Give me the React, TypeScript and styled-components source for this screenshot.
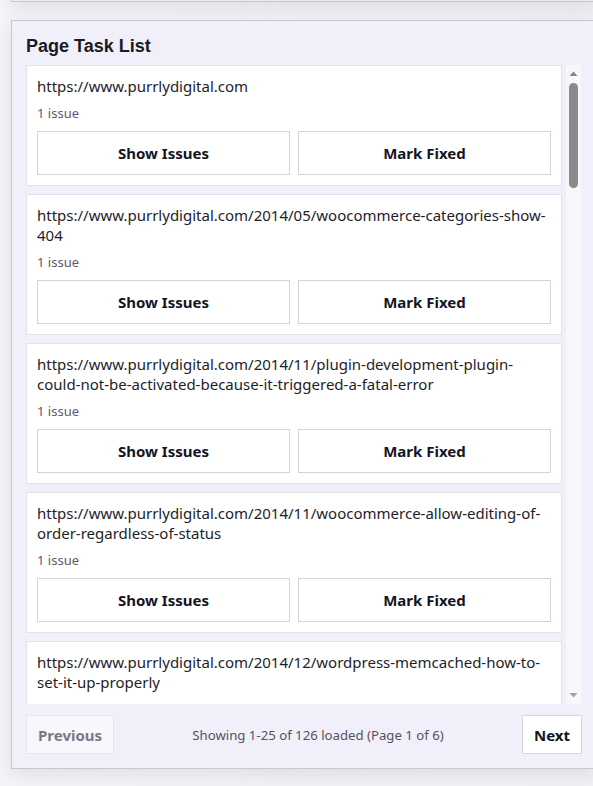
import React from "react";
import styled, { createGlobalStyle } from "styled-components";

const GlobalStyle = createGlobalStyle`
    html, body {
        margin: 0;
        padding: 0;
        overflow: hidden;
        background-color: #f3f2f6;
    }
    body {
        font-family: "Noto Sans", "Open Sans", sans-serif;
        color: #1e1d2a;
    }
    * {
        box-sizing: border-box;
    }
`

type TaskPage = {
    url: string
    issues: number
}

const pages: TaskPage[] = [
    { url: "https://www.purrlydigital.com", issues: 1 },
    { url: "https://www.purrlydigital.com/2014/05/woocommerce-categories-show-404", issues: 1 },
    { url: "https://www.purrlydigital.com/2014/11/plugin-development-plugin-could-not-be-activated-because-it-triggered-a-fatal-error", issues: 1 },
    { url: "https://www.purrlydigital.com/2014/11/woocommerce-allow-editing-of-order-regardless-of-status", issues: 1 },
    { url: "https://www.purrlydigital.com/2014/12/wordpress-memcached-how-to-set-it-up-properly", issues: 1 },
    { url: "https://www.purrlydigital.com/2015/01/woocommerce-hide-shipping-when-free-shipping-is-available", issues: 1 },
    { url: "https://www.purrlydigital.com/2015/02/wordpress-redirect-after-login", issues: 1 },
    { url: "https://www.purrlydigital.com/2015/03/nginx-fastcgi-cache-wordpress", issues: 1 },
    { url: "https://www.purrlydigital.com/2015/04/woocommerce-custom-checkout-fields", issues: 2 },
    { url: "https://www.purrlydigital.com/2015/05/wordpress-disable-xml-rpc", issues: 1 },
    { url: "https://www.purrlydigital.com/2015/06/woocommerce-remove-product-tabs", issues: 1 },
    { url: "https://www.purrlydigital.com/2015/07/wordpress-cron-not-running", issues: 1 },
    { url: "https://www.purrlydigital.com/2015/08/php-7-upgrade-wordpress", issues: 1 },
    { url: "https://www.purrlydigital.com/2015/09/woocommerce-add-to-cart-redirect", issues: 1 },
    { url: "https://www.purrlydigital.com/2015/10/wordpress-child-theme-setup", issues: 1 },
    { url: "https://www.purrlydigital.com/2015/11/redis-object-cache-wordpress", issues: 1 },
    { url: "https://www.purrlydigital.com/2015/12/woocommerce-minimum-order-amount", issues: 1 },
    { url: "https://www.purrlydigital.com/2016/01/wordpress-lazy-load-images", issues: 1 },
    { url: "https://www.purrlydigital.com/2016/02/woocommerce-change-sale-badge-text", issues: 1 },
    { url: "https://www.purrlydigital.com/2016/03/wordpress-multisite-domain-mapping", issues: 1 },
    { url: "https://www.purrlydigital.com/2016/04/lets-encrypt-ssl-nginx", issues: 1 },
    { url: "https://www.purrlydigital.com/2016/05/woocommerce-product-variations-dropdown", issues: 1 },
    { url: "https://www.purrlydigital.com/2016/06/wordpress-rest-api-authentication", issues: 1 },
    { url: "https://www.purrlydigital.com/2016/07/woocommerce-export-orders-csv", issues: 1 },
    { url: "https://www.purrlydigital.com/about", issues: 1 },
]

export default function App() {
    return (
        <Page>
            <GlobalStyle />
            <TopPanel />
            <Panel>
                <Title>Page Task List</Title>
                <ListFrame>
                    <TaskList>
                        {pages.map((page, i) => (
                            <TaskCard key={i}>
                                <TaskUrl>{page.url}</TaskUrl>
                                <IssueCount>{page.issues} {page.issues === 1 ? "issue" : "issues"}</IssueCount>
                                <Actions>
                                    <ActionButton>Show Issues</ActionButton>
                                    <ActionButton>Mark Fixed</ActionButton>
                                </Actions>
                            </TaskCard>
                        ))}
                    </TaskList>
                    <ScrollTrack>
                        <ScrollArrow>
                            <svg width="15" height="16" viewBox="0 0 15 16">
                                <path d="M3.5 11 L7.5 6.5 L11.5 11 Z" fill="#878787" />
                            </svg>
                        </ScrollArrow>
                        <ScrollThumb />
                        <ScrollArrow $bottom>
                            <svg width="15" height="16" viewBox="0 0 15 16">
                                <path d="M3.5 5 L7.5 9.5 L11.5 5 Z" fill="#a2a2a2" />
                            </svg>
                        </ScrollArrow>
                    </ScrollTrack>
                </ListFrame>
                <Pagination>
                    <PageButton disabled>Previous</PageButton>
                    <PageStatus>Showing 1-25 of 126 loaded (Page 1 of 6)</PageStatus>
                    <PageButton>Next</PageButton>
                </Pagination>
            </Panel>
        </Page>
    )
}

const Page = styled.div`
    display: flex;
    flex-direction: column;
    gap: 18px;
    width: 100%;
    height: 786px;
    padding-left: 11px;
    background: linear-gradient(90deg, #f5f4f8 0%, #f2f1f6 100%);
`

const TopPanel = styled.div`
    width: 586px;
    height: 30px;
    margin-top: -28px;
    flex-shrink: 0;

    background-color: #ebeaef;
    border: 1px solid #c9c7d0;
    box-shadow: 0 6px 18px rgba(40, 36, 60, 0.10);
`

const Panel = styled.section`
    display: flex;
    flex-direction: column;
    width: 586px;
    padding: 14px;
    flex-shrink: 0;

    background-color: #f1eff9;
    border: 1px solid #c9c7d0;
    box-shadow: 0 6px 18px rgba(40, 36, 60, 0.10);
`

const Title = styled.h2`
    margin: 0 0 8px;
    font-family: "Liberation Sans", Arial, sans-serif;
    font-size: 18px;
    line-height: 22px;
    font-weight: 700;
    color: #1b1a24;
`

const ListFrame = styled.div`
    display: flex;
    height: 639px;
    width: 555px;
`

const TaskList = styled.div`
    display: flex;
    flex-direction: column;
    flex: 1;
    gap: 8px;
    padding-right: 4px;
    overflow: hidden;
`

const ScrollTrack = styled.div`
    display: flex;
    flex-direction: column;
    align-items: center;
    width: 15px;
    flex-shrink: 0;
    background-color: #f8f7fc;
`

const ScrollArrow = styled.div<{ $bottom?: boolean }>`
    display: flex;
    width: 15px;
    height: 16px;
    margin-top: ${(props) => props.$bottom ? "auto" : "0"};
`

const ScrollThumb = styled.div`
    width: 9px;
    height: 105px;
    margin-top: 2px;
    border-radius: 5px;
    background-color: #8b8b8b;
`

const TaskCard = styled.article`
    flex-shrink: 0;
    padding: 10px;

    background-color: #ffffff;
    border: 1px solid #e3e1ea;
`

const TaskUrl = styled.div`
    font-size: 15px;
    line-height: 20px;
    color: #1e1d2a;
    overflow-wrap: anywhere;
`

const IssueCount = styled.div`
    margin: 9px 0 9px;
    font-size: 13px;
    line-height: 17px;
    color: #5d5a6c;
`

const Actions = styled.div`
    display: grid;
    grid-template-columns: 1fr 1fr;
    gap: 8px;
`

const ActionButton = styled.button`
    height: 44px;
    padding: 0 12px;

    font-family: "Noto Sans", "Open Sans", sans-serif;
    font-size: 15px;
    font-weight: 700;
    color: #15141f;
    background-color: #ffffff;
    border: 1px solid #d4d2da;
    border-radius: 0;
    cursor: pointer;
`

const Pagination = styled.div`
    display: flex;
    align-items: center;
    justify-content: space-between;
    margin-top: 11px;
`

const PageButton = styled.button`
    height: 39px;
    padding: 0 11px;

    font-family: "Noto Sans", "Open Sans", sans-serif;
    font-size: 15px;
    font-weight: 700;
    color: #15141f;
    background-color: #ffffff;
    border: 1px solid #d8d6de;
    border-radius: 0;
    cursor: pointer;

    &:disabled {
        color: #7b7886;
        background-color: #f8f7fc;
        border-color: #e6e4ee;
        cursor: default;
    }
`

const PageStatus = styled.span`
    font-size: 13.2px;
    color: #56535f;
`
